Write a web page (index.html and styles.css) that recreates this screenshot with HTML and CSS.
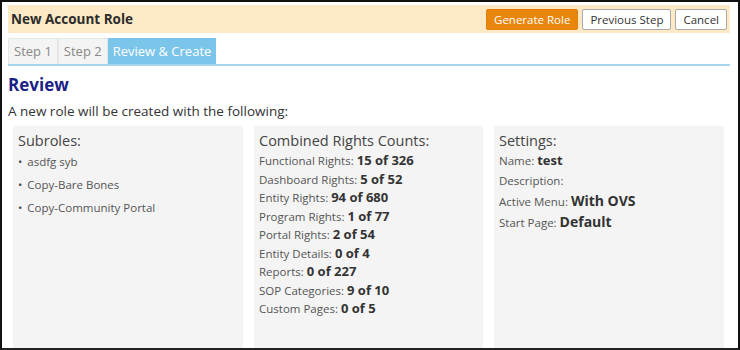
FILE: index.html
```html
<!DOCTYPE html>
<html lang="en">
<head>
    <meta charset="UTF-8">
    <meta name="viewport" content="width=device-width, initial-scale=1.0">
    <title>New Account Role</title>
    <link rel="stylesheet" href="styles.css">
</head>
<body>
    <div class="dialog">
        <div class="header">
            <h1>New Account Role</h1>
            <div class="actions">
                <button class="btn btn-primary">Generate Role</button>
                <button class="btn">Previous Step</button>
                <button class="btn">Cancel</button>
            </div>
        </div>

        <div class="tabs">
            <span class="tab">Step 1</span>
            <span class="tab">Step 2</span>
            <span class="tab active">Review &amp; Create</span>
        </div>

        <h2>Review</h2>
        <p class="intro">A new role will be created with the following:</p>

        <div class="columns">
            <div class="panel">
                <h3>Subroles:</h3>
                <ul class="subroles">
                    <li>asdfg syb</li>
                    <li>Copy-Bare Bones</li>
                    <li>Copy-Community Portal</li>
                </ul>
            </div>

            <div class="panel">
                <h3>Combined Rights Counts:</h3>
                <div class="counts">
                    <div class="count">Functional Rights: <b>15 of 326</b></div>
                    <div class="count">Dashboard Rights: <b>5 of 52</b></div>
                    <div class="count">Entity Rights: <b>94 of 680</b></div>
                    <div class="count">Program Rights: <b>1 of 77</b></div>
                    <div class="count">Portal Rights: <b>2 of 54</b></div>
                    <div class="count">Entity Details: <b>0 of 4</b></div>
                    <div class="count">Reports: <b>0 of 227</b></div>
                    <div class="count">SOP Categories: <b>9 of 10</b></div>
                    <div class="count">Custom Pages: <b>0 of 5</b></div>
                </div>
            </div>

            <div class="panel">
                <h3>Settings:</h3>
                <div class="setting">Name: <b>test</b></div>
                <div class="setting">Description:</div>
                <div class="setting big">Active Menu: <b>With OVS</b></div>
                <div class="setting big">Start Page: <b>Default</b></div>
            </div>
        </div>
    </div>
</body>
</html>
```

FILE: styles.css
```css
* {
    margin: 0;
    padding: 0;
    box-sizing: border-box;
    font-family: 'Open Sans', 'Noto Sans', sans-serif;
}

body {
    width: 740px;
    height: 350px;
    overflow: hidden;
    background: #fff;
}

.dialog {
    height: 350px;
    border: 2px solid #111;
    border-bottom-color: #222;
    padding: 3px 8px 0 6px;
    overflow: hidden;
    color: #333;
}

.header {
    display: flex;
    justify-content: space-between;
    align-items: center;
    height: 28px;
    padding: 0 3px 0 3px;
    background: #fde9c5;
}

h1 {
    font-size: 13.5px;
    font-weight: 700;
    color: #2b2b2b;
}

.actions {
    display: flex;
    gap: 4px;
}

.btn {
    height: 21px;
    padding: 0 7px;
    border: 1px solid #aaa;
    border-radius: 2px;
    background: #fff;
    color: #333;
    font-size: 11.5px;
    cursor: pointer;
}

.btn-primary {
    border-color: #e47f07;
    background: #e8850b;
    color: #fff;
}

.tabs {
    display: flex;
    margin-top: 5px;
    border-bottom: 2px solid #a9d6ef;
}

.tab {
    padding: 3px 5px;
    height: 26px;
    border: 1px solid #e6e6e6;
    border-bottom: none;
    background: #f4f4f4;
    color: #888;
    font-size: 13px;
}

.tab.active {
    padding: 3px 4px;
    border-color: #7cc5ea;
    background: #7cc5ea;
    color: #fff;
}

h2 {
    margin-top: 7px;
    font-size: 17px;
    font-weight: 700;
    color: #1b1f86;
}

.intro {
    margin-top: 6px;
    font-size: 13.5px;
    color: #333;
}

.columns {
    display: grid;
    grid-template-columns: 230px 229px 230px;
    gap: 11px;
    margin: 6px 0 0 5px;
}

.panel {
    height: 240px;
    padding: 5px 5px;
    background: #f4f4f4;
    color: #555;
}

h3 {
    font-size: 14.5px;
    font-weight: 400;
    color: #444;
}

.subroles {
    list-style: none;
    font-size: 11.5px;
}

.subroles li {
    line-height: 23px;
}

.subroles li::before {
    content: '\2022';
    margin-right: 5px;
    color: #444;
}

.counts {
    padding-top: 2px;
}

.count {
    height: 18.5px;
    font-size: 11.5px;
    line-height: 18.5px;
}

.count b {
    font-size: 13px;
    line-height: 1;
    color: #333;
}

.setting {
    height: 20px;
    font-size: 11.5px;
    line-height: 20px;
}

.setting:first-of-type {
    margin-top: 1px;
}

.setting b {
    color: #333;
    font-size: 13px;
    line-height: 1;
}

.setting.big {
    height: 21px;
    line-height: 21px;
}

.setting.big b {
    font-size: 14px;
}
```
